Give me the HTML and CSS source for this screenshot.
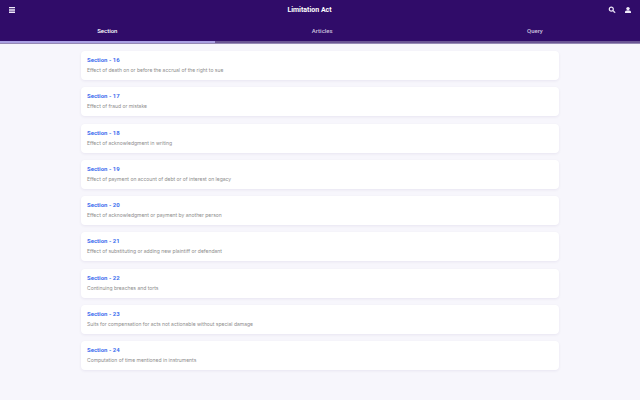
FILE: index.html
```html
<!DOCTYPE html>
<html lang="en">
<head>
    <meta charset="UTF-8">
    <meta name="viewport" content="width=device-width, initial-scale=1.0">
    <title>Limitation Act</title>
    <link rel="stylesheet" href="styles.css">
</head>
<body>
    <header class="header">
        <div class="toolbar">
            <div class="toolbar-side">
                <button class="icon-button" aria-label="Menu">
                    <svg viewBox="0 0 8 8"><path d="M1 1h6v1.3H1zM1 3.2h6v1.5H1zM1 5.5h6V7H1z"/></svg>
                </button>
            </div>
            <h1 class="title">Limitation Act</h1>
            <div class="toolbar-side toolbar-end">
                <button class="icon-button" aria-label="Search">
                    <svg viewBox="0 0 8 8"><circle cx="3.3" cy="3.2" r="2" fill="none" stroke="currentColor" stroke-width="1.2"/><path d="M4.6 4.9l.7-.7 2.1 2.1-.8.8z" stroke="currentColor" stroke-width=".3"/></svg>
                </button>
                <button class="icon-button" aria-label="Account">
                    <svg viewBox="0 0 8 8"><circle cx="4" cy="2.6" r="1.7"/><path d="M1 7V6c0-1 1.2-1.8 3-1.8S7 5 7 6v1z"/></svg>
                </button>
            </div>
        </div>
        <nav class="tabs">
            <a class="tab active" href="#section">Section</a>
            <a class="tab" href="#articles">Articles</a>
            <a class="tab" href="#query">Query</a>
        </nav>
    </header>

    <main class="list" id="section">
        <a class="card" href="#s16">
            <h2>Section - 16</h2>
            <p>Effect of death on or before the accrual of the right to sue</p>
        </a>
        <a class="card" href="#s17">
            <h2>Section - 17</h2>
            <p>Effect of fraud or mistake</p>
        </a>
        <a class="card" href="#s18">
            <h2>Section - 18</h2>
            <p>Effect of acknowledgment in writing</p>
        </a>
        <a class="card" href="#s19">
            <h2>Section - 19</h2>
            <p>Effect of payment on account of debt or of interest on legacy</p>
        </a>
        <a class="card" href="#s20">
            <h2>Section - 20</h2>
            <p>Effect of acknowledgment or payment by another person</p>
        </a>
        <a class="card" href="#s21">
            <h2>Section - 21</h2>
            <p>Effect of substituting or adding new plaintiff or defendant</p>
        </a>
        <a class="card" href="#s22">
            <h2>Section - 22</h2>
            <p>Continuing breaches and torts</p>
        </a>
        <a class="card" href="#s23">
            <h2>Section - 23</h2>
            <p>Suits for compensation for acts not actionable without special damage</p>
        </a>
        <a class="card" href="#s24">
            <h2>Section - 24</h2>
            <p>Computation of time mentioned in instruments</p>
        </a>
    </main>
</body>
</html>
```
FILE: styles.css
```css
* {
    box-sizing: border-box;
}

body {
    display: flex;
    flex-direction: column;
    min-height: 100vh;
    margin: 0;
    font-family: Roboto, "Liberation Sans", sans-serif;
    background-color: #f7f6fc;
}

.header {
    background-color: #300c69;
    color: white;
    box-shadow: 0 1px 0 #9589b4;
}

.toolbar {
    display: flex;
    align-items: center;
    justify-content: space-between;
    height: 20px;
    padding: 0 8px;
}

.toolbar-side {
    display: flex;
    gap: 8px;
}

.toolbar-end {
    padding-left: 5px;
}

.title {
    margin: 0;
    font-size: 7px;
    font-weight: 700;
    line-height: 21px;
}

.icon-button {
    width: 8px;
    height: 8px;
    padding: 0;
    border: none;
    background: none;
    color: #f0ebfa;
    cursor: pointer;
}

.icon-button svg {
    display: block;
    width: 8px;
    height: 8px;
    fill: currentColor;
}

/* Tabs */
.tabs {
    display: flex;
    height: 23px;
}

.tab {
    flex: 1 1 auto;
    border-bottom: 2px solid #6a5594;
    color: #cbc1de;
    font-size: 6px;
    font-weight: 500;
    line-height: 22px;
    text-align: center;
    text-decoration: none;
}

.tab.active {
    border-bottom-color: #a99fe2;
    color: white;
}

/* Section cards */
.list {
    display: flex;
    flex: 1;
    flex-direction: column;
    justify-content: space-between;
    width: 75%;
    margin: 0 auto;
    padding: 8px 1px 30px;
}

.card {
    padding: 4px 6px 5px;
    border-radius: 4px;
    background-color: white;
    box-shadow: 0 1px 3px rgba(48, 12, 105, 0.07);
    text-decoration: none;
}

.card h2 {
    margin: 0 0 2px;
    color: #3f6fee;
    font-size: 6px;
    font-weight: 700;
    line-height: 9px;
}

.card p {
    margin: 0;
    color: #8c8c8c;
    font-family: Inter, Roboto, sans-serif;
    font-size: 5px;
    line-height: 9px;
}
```
